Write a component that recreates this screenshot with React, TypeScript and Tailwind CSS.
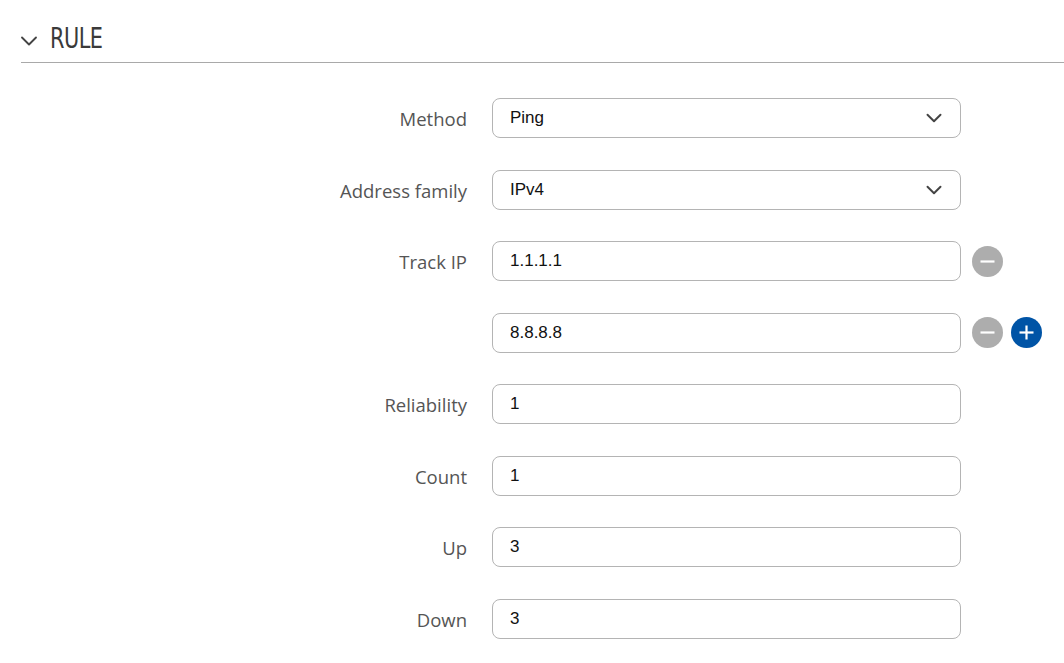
import { ChevronDown } from 'lucide-react';

interface Row {
  label: string;
  value: string;
  select?: boolean;
  minus?: boolean;
  plus?: boolean;
}

const rows: Row[] = [
  { label: 'Method', value: 'Ping', select: true },
  { label: 'Address family', value: 'IPv4', select: true },
  { label: 'Track IP', value: '1.1.1.1', minus: true },
  { label: '', value: '8.8.8.8', minus: true, plus: true },
  { label: 'Reliability', value: '1' },
  { label: 'Count', value: '1' },
  { label: 'Up', value: '3' },
  { label: 'Down', value: '3' },
];

function RoundButton({ kind }: Readonly<{ kind: 'minus' | 'plus' }>) {
  return (
    <span
      className={
        kind === 'minus'
          ? 'flex h-[31px] w-[31px] items-center justify-center rounded-full bg-[#adadad]'
          : 'flex h-[31px] w-[31px] items-center justify-center rounded-full bg-[#0054a6]'
      }
    >
      <svg width="17" height="17" viewBox="0 0 17 17">
        <path d="M1.5 8.5h14" stroke="white" strokeWidth="2.2" />
        {kind === 'plus' && (
          <path d="M8.5 1.5v14" stroke="white" strokeWidth="2.2" />
        )}
      </svg>
    </span>
  );
}

export default function App() {
  return (
    <div className="min-h-screen bg-white pl-[21px] font-['Open_Sans',sans-serif]">
      <div className="flex h-[63px] items-center gap-[7px] border-b border-[#a9a9a9] pt-[14px]">
        <ChevronDown size={28} strokeWidth={1.6} className="-ml-[6px] mt-[6px] text-[#444]" />
        <h2 className="origin-left scale-x-[0.72] font-['DejaVu_Sans',sans-serif] text-[29px] leading-none tracking-tight text-[#3a3a3a]">
          RULE
        </h2>
      </div>

      <div className="flex flex-col gap-[31.5px] pt-[35px]">
        {rows.map((row, i) => (
          <div key={i} className="flex h-[40px] items-center">
            <label className="w-[471px] shrink-0 pt-[2px] pr-[25px] text-right text-[18.5px] text-[#555]">
              {row.label}
            </label>
            <div className="relative flex h-[40px] w-[469px] items-center rounded-[8px] border border-[#b4b4b4] pl-[17px] font-['Liberation_Sans',sans-serif] text-[17px] text-[#111]">
              {row.value}
              {row.select && (
                <ChevronDown
                  size={26}
                  strokeWidth={1.8}
                  className="absolute top-[6px] right-[13px] text-[#444]"
                />
              )}
            </div>
            <div className="flex gap-[8px] pl-[11px]">
              {row.minus && <RoundButton kind="minus" />}
              {row.plus && <RoundButton kind="plus" />}
            </div>
          </div>
        ))}
      </div>
    </div>
  );
}
